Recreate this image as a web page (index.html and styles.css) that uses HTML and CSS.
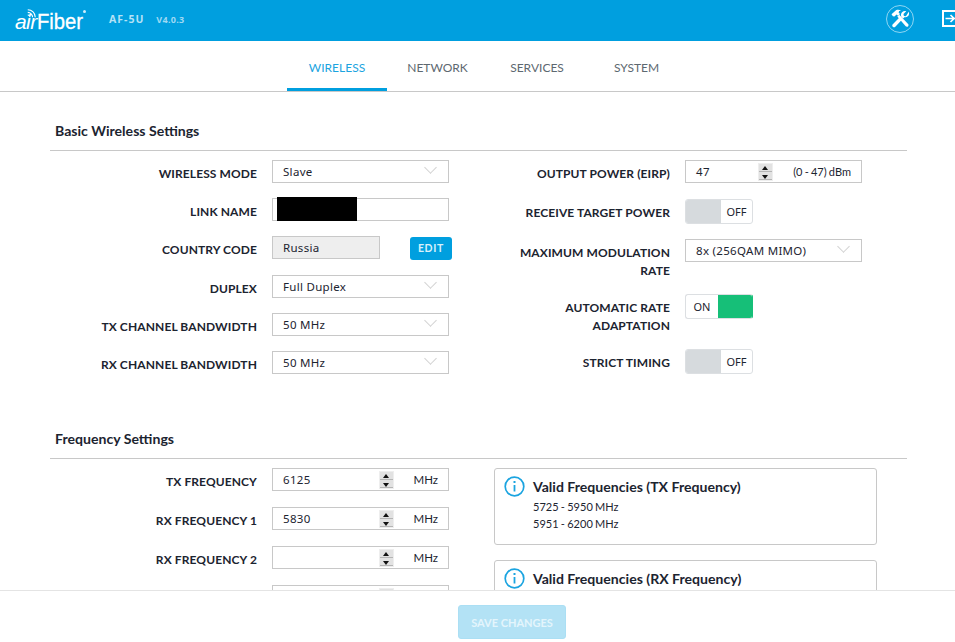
FILE: index.html
```html
<!DOCTYPE html>
<html lang="en">
<head>
<meta charset="utf-8">
<title>airFiber AF-5U</title>
<link rel="stylesheet" href="styles.css">
</head>
<body>
<div class="app">
  <header class="topbar">
    <div class="logo"><span class="logo-air">air</span><span class="logo-fiber">Fiber</span><span class="logo-reg"></span>
      <svg class="logo-wifi" width="9" height="9" viewBox="0 0 12 12" fill="none" stroke="#fff" stroke-width="1.5"><path d="M1 4.5a6.5 6.5 0 0 1 6.5 6.5M1 1a10 10 0 0 1 10 10M1 8a3 3 0 0 1 3 3"/></svg>
    </div>
    <span class="model">AF-5U</span>
    <span class="version">V4.0.3</span>
    <span class="spacer"></span>
    <button class="tools" aria-label="Tools">
      <svg width="20" height="20" viewBox="0 0 20 20" fill="#fff"><path d="M1.5 5.2 6 1.2c1.6-.8 3.6-.6 5 .5l-1.8.3-.6 1.6 1.4 1.4L8 6.8 6.6 5.5 4.4 7.5 2.9 7.3Z"/><path d="m7.3 7.6 2-1.9 8.8 9.4c.6.7.5 1.7-.1 2.3s-1.7.5-2.3-.1Z"/><path d="M18.8 2.7c.6 1.7.2 3.5-1 4.6-1 .9-2.3 1.2-3.5.9L5.3 17.7c-.7.7-1.8.7-2.5 0s-.7-1.8 0-2.5l6.9-7 2.3 2.4 1-1.1-2.2-2.4.3-.3c-.3-1.3 0-2.7 1-3.6 1.1-1.1 2.7-1.4 4.1-.9l-2.7 2.6.4 2 2 .4Z"/></svg>
    </button>
    <span class="logout">
      <svg width="13" height="17" viewBox="0 0 13 17" fill="none" stroke="#fff"><path stroke-width="2" d="M13 1H1v15h12"/><path stroke-width="1.6" d="M3.5 8.5H13M8.5 5l3.5 3.5L8.5 12"/></svg>
    </span>
  </header>

  <nav class="tabs">
    <a class="tab active">WIRELESS</a>
    <a class="tab">NETWORK</a>
    <a class="tab">SERVICES</a>
    <a class="tab">SYSTEM</a>
  </nav>

  <main class="content">
    <section class="section section-basic">
      <h2 class="section-title">Basic Wireless Settings</h2>
      <div class="columns">
        <div class="col-left">
          <div class="row"><label class="label">WIRELESS MODE</label><div class="field select">Slave<i class="chev"></i></div></div>
          <div class="row"><label class="label">LINK NAME</label><div class="field field-link"><span class="redact"></span></div></div>
          <div class="row"><label class="label">COUNTRY CODE</label><div class="field field-disabled">Russia</div><button class="edit">EDIT</button></div>
          <div class="row row-after-country"><label class="label">DUPLEX</label><div class="field select">Full Duplex<i class="chev"></i></div></div>
          <div class="row"><label class="label">TX CHANNEL BANDWIDTH</label><div class="field select">50 MHz<i class="chev"></i></div></div>
          <div class="row"><label class="label">RX CHANNEL BANDWIDTH</label><div class="field select">50 MHz<i class="chev"></i></div></div>
        </div>
        <div class="col-right">
          <div class="rrow rrow-power"><label class="label rlabel">OUTPUT POWER (EIRP)</label><div class="field field-num"><span class="num-val">47</span><span class="spin spin-power"><i class="up"></i><i class="down"></i></span><span class="unit unit-range">(0 - 47) dBm</span></div></div>
          <div class="rrow rrow-rtp"><label class="label rlabel">RECEIVE TARGET POWER</label><div class="toggle"><span class="t-off-fill"></span><span class="t-text">OFF</span></div></div>
          <div class="rrow rrow-mod"><label class="label rlabel">MAXIMUM MODULATION RATE</label><div class="field select">8x (256QAM MIMO)<i class="chev"></i></div></div>
          <div class="rrow rrow-auto"><label class="label rlabel">AUTOMATIC RATE ADAPTATION</label><div class="toggle toggle-on"><span class="t-text">ON</span><span class="t-on-fill"></span></div></div>
          <div class="rrow rrow-strict"><label class="label rlabel">STRICT TIMING</label><div class="toggle"><span class="t-off-fill"></span><span class="t-text">OFF</span></div></div>
        </div>
      </div>
    </section>

    <section class="section section-freq">
      <h2 class="section-title">Frequency Settings</h2>
      <div class="columns">
        <div class="col-left col-freq">
          <div class="row"><label class="label">TX FREQUENCY</label><div class="field field-num"><span class="num-val">6125</span><span class="spin"><i class="up"></i><i class="down"></i></span><span class="unit">MHz</span></div></div>
          <div class="row"><label class="label">RX FREQUENCY 1</label><div class="field field-num"><span class="num-val">5830</span><span class="spin"><i class="up"></i><i class="down"></i></span><span class="unit">MHz</span></div></div>
          <div class="row"><label class="label">RX FREQUENCY 2</label><div class="field field-num"><span class="num-val"></span><span class="spin"><i class="up"></i><i class="down"></i></span><span class="unit">MHz</span></div></div>
          <div class="row"><label class="label"></label><div class="field field-num"><span class="num-val"></span><span class="spin"><i class="up"></i><i class="down"></i></span></div></div>
        </div>
        <div class="col-info">
          <div class="info">
            <svg class="info-icon" width="21" height="21" viewBox="0 0 21 21" fill="none" stroke="#1ba4e0"><circle cx="10.5" cy="10.5" r="9.3" stroke-width="1.7"/><path stroke-width="1.8" d="M10.5 9v6.5"/><path stroke-width="2" d="M10.5 5v2"/></svg>
            <div><h3 class="info-title">Valid Frequencies (TX Frequency)</h3><p class="info-line">5725 - 5950 MHz</p><p class="info-line">5951 - 6200 MHz</p></div>
          </div>
          <div class="info">
            <svg class="info-icon" width="21" height="21" viewBox="0 0 21 21" fill="none" stroke="#1ba4e0"><circle cx="10.5" cy="10.5" r="9.3" stroke-width="1.7"/><path stroke-width="1.8" d="M10.5 9v6.5"/><path stroke-width="2" d="M10.5 5v2"/></svg>
            <div><h3 class="info-title">Valid Frequencies (RX Frequency)</h3></div>
          </div>
        </div>
      </div>
    </section>
  </main>

  <footer class="footer"><button class="save">SAVE CHANGES</button></footer>
</div>
</body>
</html>
```
FILE: styles.css
```css
* { box-sizing: border-box; }
html, body { margin: 0; height: 100%; overflow: hidden; background: #fff; }
body { font-family: Lato, "Noto Sans", sans-serif; color: #1c2430; }
.app { height: 100vh; display: flex; flex-direction: column; }

.topbar { flex: 0 0 41px; background: #009fdf; display: flex; align-items: center; padding-left: 15px; overflow: hidden; }
.logo { position: relative; flex: none; width: 94px; height: 41px; display: flex; align-items: baseline; color: #fff; padding-top: 10px; font-family: "Liberation Sans", sans-serif; }
.logo-air { font-size: 21px; font-style: italic; letter-spacing: -.6px; line-height: 23px; }
.logo-fiber { font-size: 22px; line-height: 23px; display: inline-block; transform: scaleX(.92); transform-origin: left; letter-spacing: 0; -webkit-text-stroke: .3px #fff; }
.logo-wifi { position: absolute; left: 12px; top: 9px; }
.logo-reg { position: absolute; left: 68px; top: 10px; width: 3px; height: 3px; border-radius: 50%; background: #cfeefb; }
.model { font-family: "Open Sans", sans-serif; font-size: 10.5px; font-weight: 700; color: #b5e2f6; letter-spacing: 1px; margin-right: 12px; margin-top: -3px; }
.version { font-family: "Open Sans", sans-serif; font-size: 9px; font-weight: 700; color: #9fd9f3; letter-spacing: .3px; margin-top: -3px; }
.spacer { flex: 1; }
.tools { flex: none; width: 28px; height: 28px; margin: -4px 28px 0 0; padding: 0; border: 1px solid #8fd6f3; border-radius: 50%; background: none; display: flex; align-items: center; justify-content: center; }
.logout { flex: 0 0 13px; display: flex; margin-top: -4px; }

.tabs { flex: 0 0 51px; display: flex; padding-left: 287px; border-bottom: 1px solid #c8c8c8; }
.tab { height: 50px; font-size: 12px; line-height: 53px; color: #5d6870; text-align: center; }
.tab:nth-child(1) { width: 100px; }
.tab:nth-child(2) { width: 101px; }
.tab:nth-child(3) { width: 98px; }
.tab:nth-child(4) { width: 101px; }
.tab.active { color: #1ba4e0; border-bottom: 3px solid #009fdf; }

.content { flex: 1; min-height: 0; overflow: hidden; padding: 28px 48px 0 50px; }
.section-title { margin: 0; height: 31px; padding: 1px 0 0 5px; font-size: 14.1px; line-height: 20px; font-weight: 700; color: #1c2430; border-bottom: 1px solid #c8c8c8; }
.section-basic { height: 308px; }
.columns { display: flex; padding-top: 9px; }

.col-left { width: 399px; flex: none; display: flex; flex-direction: column; gap: 15px; }
.row-after-country { margin-top: 1px; }
.col-right { flex: 1; }
.row { display: flex; align-items: center; height: 23px; }
.label { font-size: 12px; font-weight: 700; letter-spacing: .1px; color: #1c2430; text-align: right; width: 207px; margin-right: 15px; padding-top: 4px; line-height: 18px; flex: none; }
.field { position: relative; flex: none; width: 177px; height: 23px; border: 1px solid #c8c8c8; background: #fff; font-family: "Noto Sans", "Open Sans", sans-serif; font-size: 11.5px; line-height: 20px; padding-left: 10px; color: #1c2430; letter-spacing: .3px; display: flex; align-items: center; }
.select .chev { position: absolute; right: 13px; top: 2px; width: 9px; height: 9px; border-right: 1.5px solid #d2d2d2; border-bottom: 1.5px solid #d2d2d2; transform: rotate(45deg); }
.field-link { padding-left: 0; }
.redact { display: block; width: 80px; height: 24px; margin: -1px 0 0 4px; background: #000; }
.field-disabled { width: 108px; background: #eee; }
.edit { flex: none; margin: 1px 0 0 30px; width: 42px; height: 23px; border: 0; border-radius: 3px; background: #009fdf; color: #d8f1fb; font-family: Lato, sans-serif; font-size: 10.5px; font-weight: 700; letter-spacing: .7px; padding: 0; }

.rrow { display: flex; align-items: flex-start; }
.rlabel { width: 221px; padding: 5px 0 0 60px; }
.rrow-power { height: 39px; }
.rrow-rtp { height: 40px; }
.rrow-mod { height: 55px; }
.rrow-auto { height: 55px; }

.toggle { flex: none; display: flex; width: 68px; height: 25px; border: 1px solid #dcdfe2; border-radius: 3px; overflow: hidden; background: #fff; }
.toggle-on { border-right-color: #16bf78; }
.t-off-fill { width: 35px; background: #d6dadd; }
.t-on-fill { width: 34px; background: #16bf78; }
.t-text { flex: 1; font-family: "Noto Sans", sans-serif; font-size: 11px; line-height: 23px; color: #1c2430; text-align: center; }

.num-val { width: 96px; flex: none; }
.spin { flex: none; width: 15px; height: 18px; background: #eee; border: 1px solid #eee; display: flex; flex-direction: column; }
.spin i { flex: 1; position: relative; background: #e2e2e2; border-bottom: 1px solid #b5b5b5; }
.spin i::after { content: ""; position: absolute; left: 3px; border-left: 3.5px solid transparent; border-right: 3.5px solid transparent; }
.spin .up::after { top: 2px; border-bottom: 4px solid #111; }
.spin .down::after { top: 3px; border-top: 4px solid #111; }
.spin-power { margin-left: -34px; }
.unit { margin-left: auto; padding-right: 10px; font-family: Lato, sans-serif; font-size: 11.5px; letter-spacing: 0; }
.unit-range { font-size: 11px; word-spacing: -.6px; }

.col-freq { gap: 16px; }
.col-info { width: 383px; margin-left: 45px; display: flex; flex-direction: column; gap: 15px; }
.info { display: flex; gap: 8px; height: 77px; padding: 7px 10px 7px 9px; border: 1px solid #c8c8c8; border-radius: 3px; flex: none; }
.info-icon { flex: none; }
.info-title { margin: 0; font-size: 14.1px; line-height: 22px; font-weight: 700; color: #1c2430; }
.info-line { margin: 0; font-size: 11px; line-height: 17px; word-spacing: -.5px; }

.footer { flex: 0 0 52px; background: #fff; border-top: 1px solid #e4e4e4; display: flex; padding: 14px 0 0 458px; }
.save { width: 108px; height: 34px; border: 1px solid #abdff4; border-radius: 3px; background: #b3e2f5; color: #e4f5fc; font-family: Lato, sans-serif; font-size: 11px; font-weight: 700; padding: 0; }
```
